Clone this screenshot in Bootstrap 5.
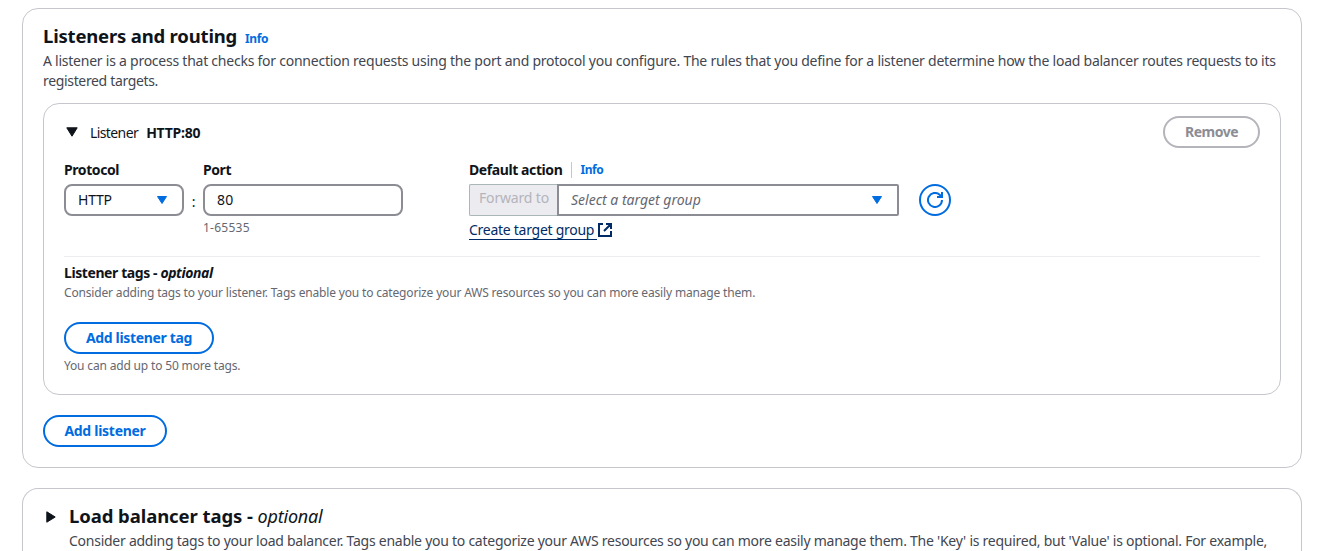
<!DOCTYPE html>
<html lang="en">
<head>
<meta charset="utf-8">
<meta name="viewport" content="width=device-width, initial-scale=1">
<title>Listeners and routing</title>
<link href="https://cdn.jsdelivr.net/npm/bootstrap@5.3.0/dist/css/bootstrap.min.css" rel="stylesheet">
<style>
  :root { --ink:#0f141a; --muted:#424650; --hint:#656871; --blue:#006ce0; --line:#c6c6cd; --field:#8c8c94; }
  body { font-family:"Noto Sans","Open Sans",sans-serif; font-size:14px; line-height:20px; color:var(--ink); letter-spacing:-.242px; }
  .page { padding:8px 27px 0 22px; }
  .panel { border:1px solid var(--line); border-radius:16px; background:#fff; }
  .panel-main { height:460px; padding:15px 20px 20px; margin-bottom:20px; }
  .panel-tags { height:63px; padding:15px 20px 0 21px; border-bottom:0; border-radius:16px 16px 0 0; }
  .panel-inner { height:292px; padding:12px 20px 0; margin-top:12px; }
  h2 { font-size:18.5px; line-height:24px; font-weight:700; letter-spacing:-.19px; margin:0; }
  .tags-title { letter-spacing:-.08px; }
  .tags-title em { font-weight:400; font-size:18px; letter-spacing:-.2px; }
  .tags-toggle { margin:7px 0 0 2px; }
  .tags-text { margin-left:13px; }
  .desc { color:var(--muted); margin:2px 0 0; }
  .desc-last { letter-spacing:-.34px; }
  .tags-text .desc { margin-top:3px; letter-spacing:-.256px; }
  .info-link { color:var(--blue); font-size:12px; font-weight:700; letter-spacing:-.38px; text-decoration:none; }
  .label-text { font-weight:700; letter-spacing:-.41px; }
  .hint { font-size:12px; line-height:16px; color:var(--hint); letter-spacing:-.168px; }
  .tags-hint { margin-top:2px; }
  .range { letter-spacing:.25px; }
  .toggle { margin:-2px 12px 0 2px; }
  .listener-head { padding-top:2px; }
  .listener-word { letter-spacing:-.6px; margin-right:8px; }
  .fields { margin-top:12px; }
  .btn-pill { height:32px; border:2px solid var(--blue); border-radius:20px; padding:0; color:var(--blue); font-size:14px; line-height:28px; font-weight:700; letter-spacing:-.33px; background:#fff; }
  .btn-pill:disabled { border-color:#b4b4bb; color:#8c8c94; opacity:1; letter-spacing:-.48px; width:97px; }
  .w-tag { width:150px; margin-top:21px; }
  .w-add { width:124px; letter-spacing:-.28px; margin-top:20px; }
  .field { height:32px; border:2px solid var(--field); border-radius:8px; padding:0 12px; background:#fff; }
  .w-protocol { width:120px; }
  .w-protocol svg { margin-right:2px; }
  .w-port { width:200px; }
  input.field { letter-spacing:.3px; color:var(--ink); outline:0; padding-bottom:2px; }
  .colon { width:19px; padding-top:32px; text-align:center; }
  .action { width:430px; margin-left:66px; }
  .forward { width:88px; height:32px; border:1px solid #aab7b8; border-right:0; border-radius:2px 0 0 2px; background:#ebebf0; color:#b4b4bb; padding:3px 0 0 9px; letter-spacing:-.17px; }
  .target { border-radius:0 2px 2px 0; color:var(--hint); padding-right:14px; font-style:italic; letter-spacing:0; }
  .divider-v { width:1px; height:16px; background:var(--line); margin:0 8px 0 9px; }
  .create { color:#002b66; text-decoration:none; border-bottom:1px solid #002b66; line-height:19px; padding-right:3px; letter-spacing:-.27px; }
  .refresh { width:32px; height:32px; margin:24px 0 0 20px; border-radius:50%; }
  .section-line { border-top:1px solid #ebebf0; margin-top:16px; padding-top:6px; }
  svg { display:block; flex:none; }
</style>
</head>
<body>
<main class="page">
  <section class="panel panel-main">
    <header>
      <div class="d-flex align-items-baseline"><h2>Listeners and routing</h2><a class="info-link ms-2" href="#">Info</a></div>
      <p class="desc">A listener is a process that checks for connection requests using the port and protocol you configure. The rules that you define for a listener determine how the load balancer routes requests to its<br><span class="desc-last">registered targets.</span></p>
    </header>

    <div class="panel panel-inner">
      <div class="d-flex justify-content-between align-items-center">
        <div class="d-flex align-items-center listener-head">
          <svg class="toggle" width="12" height="10"><path d="M.8.8h10.4L6 9.2z" fill="#0f141a" stroke="#0f141a" stroke-linejoin="round"/></svg>
          <div class="d-flex"><span class="listener-word">Listener</span><strong>HTTP:80</strong></div>
        </div>
        <button class="btn btn-pill" disabled>Remove</button>
      </div>

      <div class="d-flex align-items-start fields">
        <div class="w-protocol">
          <div class="label-text mb-1">Protocol</div>
          <div class="field d-flex align-items-center justify-content-between">
            <span>HTTP</span>
            <svg width="12" height="8"><path d="M1.5.5h9L6 7.5z" fill="#006ce0" stroke="#006ce0" stroke-linejoin="round"/></svg>
          </div>
        </div>
        <div class="colon">:</div>
        <div class="w-port">
          <div class="label-text mb-1">Port</div>
          <input class="field d-block w-100" value="80" aria-label="Port">
          <div class="hint range mt-1">1-65535</div>
        </div>
        <div class="action">
          <div class="d-flex align-items-center mb-1"><span class="label-text">Default action</span><span class="divider-v"></span><a href="#" class="info-link">Info</a></div>
          <div class="d-flex">
            <div class="forward">Forward to</div>
            <div class="field target flex-grow-1 d-flex align-items-center justify-content-between">
              <span>Select a target group</span>
              <svg width="12" height="8"><path d="M1.5.5h9L6 7.5z" fill="#006ce0" stroke="#006ce0" stroke-linejoin="round"/></svg>
            </div>
          </div>
          <div class="d-flex mt-1"><a href="#" class="create">Create target group</a>
            <svg width="16" height="18" fill="none" stroke="#002b66" stroke-width="2"><path d="M6 4H2v12h12v-5M9 4h5v5M14 4 7 11"/></svg>
          </div>
        </div>
        <button class="btn btn-pill refresh d-flex align-items-center justify-content-center" aria-label="Refresh">
          <svg width="16" height="16" fill="none" stroke="#006ce0" stroke-width="2"><path d="M15 8a7 7 0 1 1-2.4-5.3L14.5 4.5"/><path d="M15 0v5h-5"/></svg>
        </button>
      </div>

      <div class="section-line">
        <div class="label-text">Listener tags - <em>optional</em></div>
        <div class="hint tags-hint">Consider adding tags to your listener. Tags enable you to categorize your AWS resources so you can more easily manage them.</div>
        <button class="btn btn-pill w-tag d-block">Add listener tag</button>
        <div class="hint mt-1">You can add up to 50 more tags.</div>
      </div>
    </div>
    <button class="btn btn-pill w-add d-block">Add listener</button>
  </section>

  <section class="panel panel-tags d-flex align-items-start">
    <svg class="tags-toggle" width="10" height="12"><path d="M.8.8v10.4L9.2 6z" fill="#0f141a" stroke="#0f141a" stroke-linejoin="round"/></svg>
    <div class="tags-text text-nowrap">
      <h2 class="tags-title">Load balancer tags - <em>optional</em></h2>
      <p class="desc">Consider adding tags to your load balancer. Tags enable you to categorize your AWS resources so you can more easily manage them. The 'Key' is required, but 'Value' is optional. For example,</p>
    </div>
  </section>
</main>
<script src="https://cdn.jsdelivr.net/npm/bootstrap@5.3.0/dist/js/bootstrap.bundle.min.js"></script>
</body>
</html>
